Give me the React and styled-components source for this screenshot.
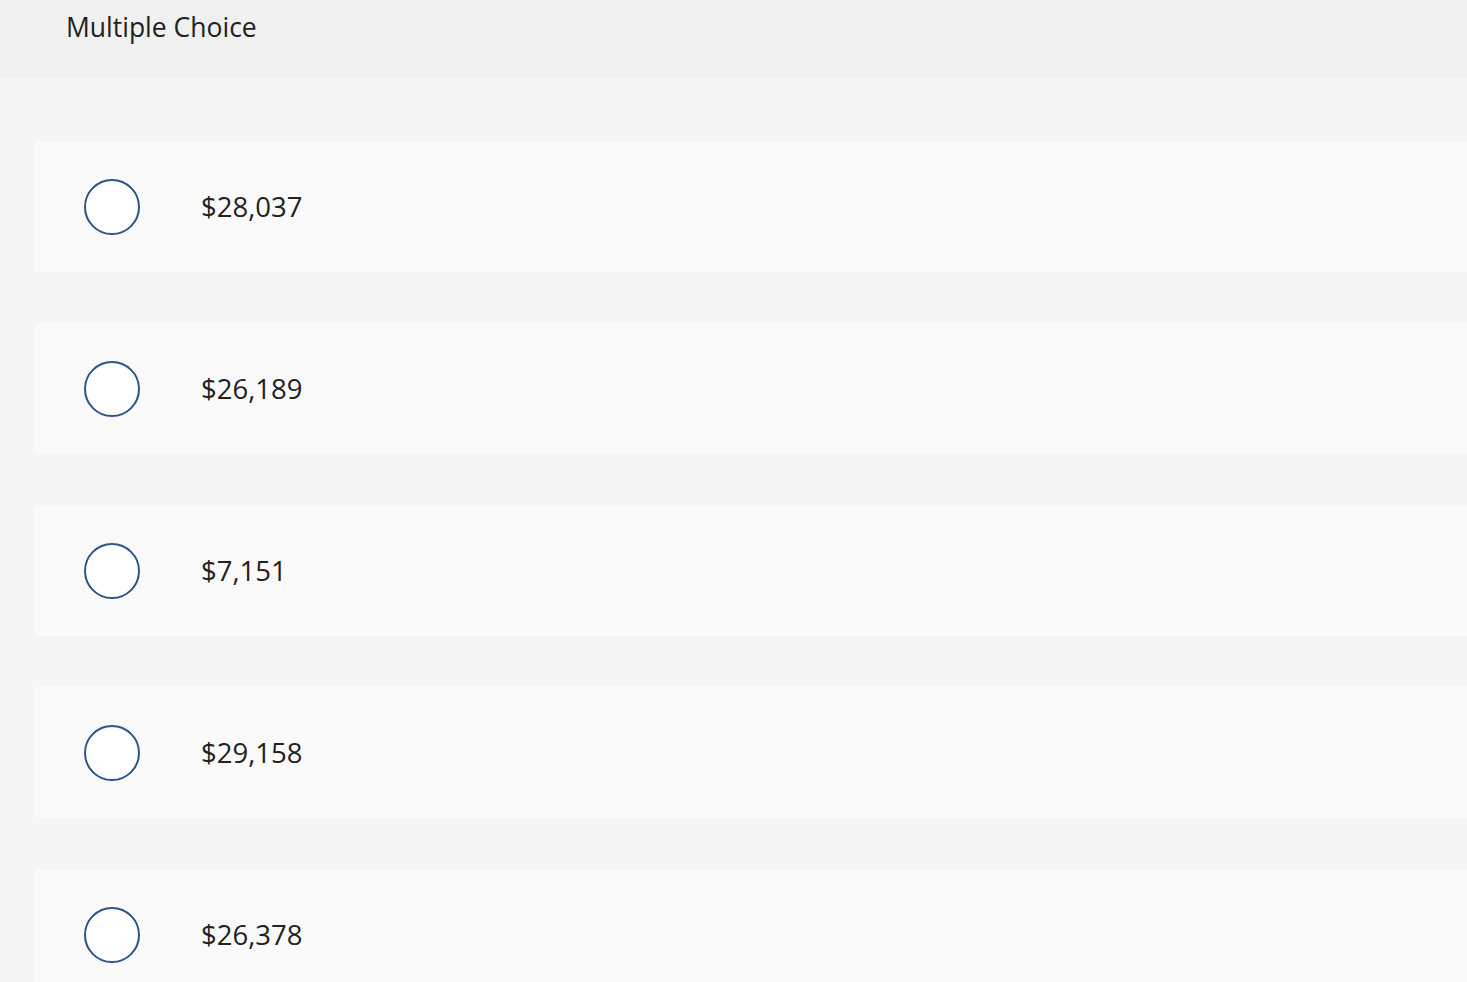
import styled, { createGlobalStyle } from "styled-components";

const GlobalStyle = createGlobalStyle`
  html, body {
    margin: 0;
    padding: 0;
    background: #f5f5f5;
    overflow-x: hidden;
  }
  body {
    font-family: "Open Sans", "Liberation Sans", sans-serif;
    color: #222;
  }
`;

const choices = ["$28,037", "$26,189", "$7,151", "$29,158", "$26,378"];

const App = () => {
  return (
    <>
      <GlobalStyle />
      <StyledHeader>
        <StyledTitle>Multiple Choice</StyledTitle>
      </StyledHeader>
      <StyledList>
        {choices.map((c) => (
          <StyledChoice key={c}>
            <StyledRadio />
            <StyledLabel>{c}</StyledLabel>
          </StyledChoice>
        ))}
      </StyledList>
    </>
  );
};

const StyledHeader = styled.header`
  height: 77px;
  background: #f0f0f0;
  padding-left: 66px;
  box-sizing: border-box;
`;

const StyledTitle = styled.h2`
  margin: 0;
  padding-top: 11px;
  font-size: 26.5px;
  font-weight: 400;
  line-height: 32px;
  color: #222;
`;

const StyledList = styled.div`
  display: flex;
  flex-direction: column;
  gap: 51px;
  padding: 64px 0 0 34px;
  margin-right: -20px;
`;

const StyledChoice = styled.div`
  display: flex;
  align-items: center;
  height: 131px;
  background: #fafafa;
  border-radius: 5px;
  padding-left: 50px;
`;

const StyledRadio = styled.div`
  width: 56px;
  height: 56px;
  box-sizing: border-box;
  border-radius: 50%;
  border: 2px solid #2d5587;
  background: #fff;
  flex-shrink: 0;
`;

const StyledLabel = styled.span`
  margin-left: 61px;
  font-size: 27.5px;
  color: #222;
`;

export default App;
